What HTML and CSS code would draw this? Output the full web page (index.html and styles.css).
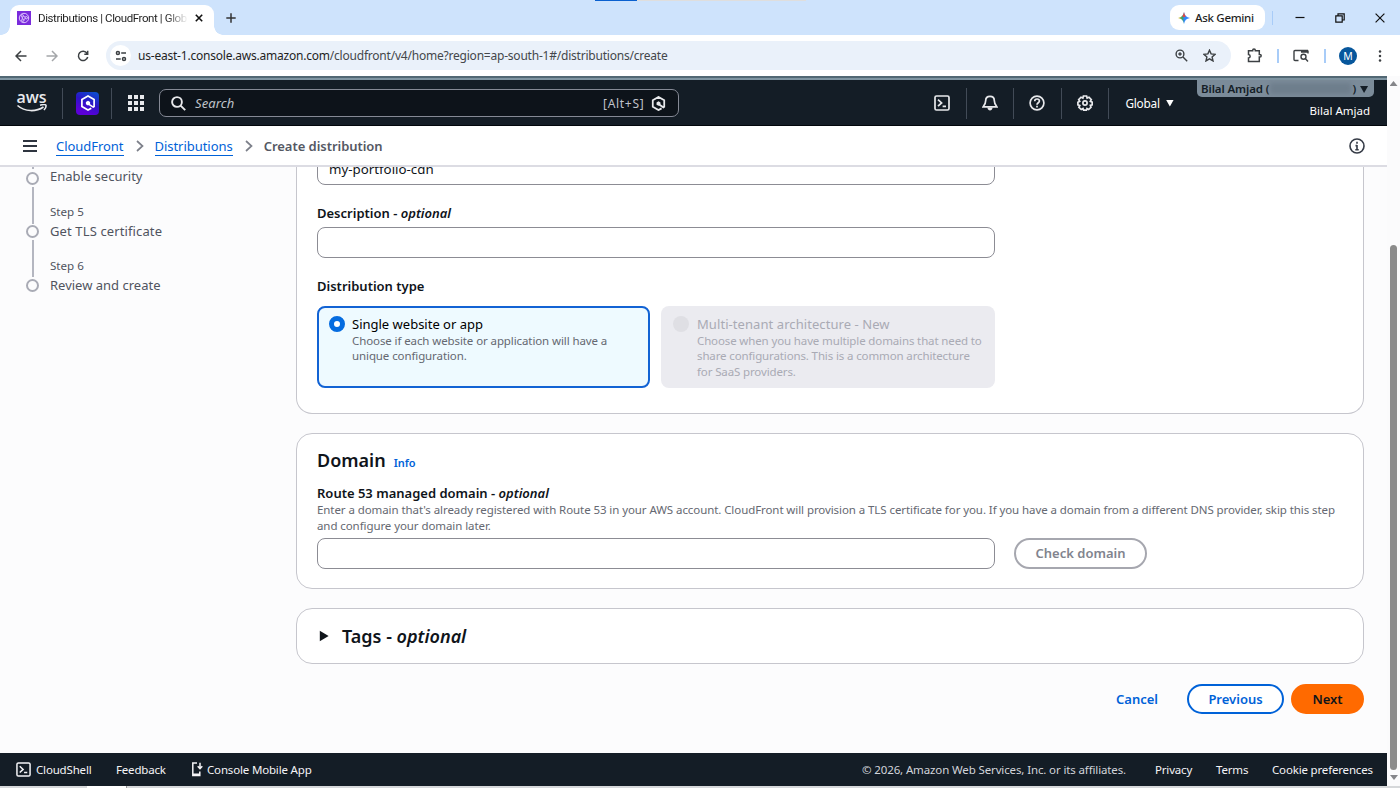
FILE: index.html
```html
<!DOCTYPE html>
<html lang="en">
<head>
<meta charset="utf-8">
<title>Distributions | CloudFront | Global</title>
<link rel="stylesheet" href="styles.css">
</head>
<body>
<svg width="0" height="0" class="defs" aria-hidden="true">
  <symbol id="terminal" viewBox="0 0 16 16"><rect x="1" y="1" width="14" height="14" rx="1.5"/><path d="M4 4.6l3.6 3.3L4 11.2M8.6 11.3H12"/></symbol>
  <symbol id="hexq" viewBox="0 0 16 16"><path d="M11.300 13.200L8 15 1.900 11.500v-7L8 1l6.100 3.500v7l-.9.6-4.600-3"/><path d="M5.900 6.900v2.300l2.100 1.200 2.100-1.200V6.900L8 5.700z" fill="currentColor" stroke="none"/></symbol>
</svg>
<div class="window">
  <header class="tabstrip">
    <div class="tab">
      <span class="favicon"><svg viewBox="0 0 14 14"><circle cx="7" cy="7" r="4.700"/><circle cx="5.200" cy="4.800" r="1.200"/><circle cx="9.300" cy="6.700" r="1.200"/><circle cx="5.800" cy="9.200" r="1.200"/><path d="M6.400 5.200l1.800 1M8.300 7.400L6.800 8.600M5.300 6v2"/></svg></span>
      <span class="tab-title">Distributions | CloudFront | Glob</span>
      <svg class="tab-close" viewBox="0 0 8 8"><path d="M.8.8l6.400 6.400M7.200.8L.8 7.200"/></svg>
    </div>
    <svg class="tab-add" viewBox="0 0 10 10"><path d="M5 .3v9.400M.3 5h9.400"/></svg>
    <div class="loader"></div>
    <div class="gemini">
      <svg viewBox="0 0 12 12"><defs><linearGradient id="gm" x1="0" y1="0" x2="1" y2="0"><stop offset="0" stop-color="#fabb05"/><stop offset=".35" stop-color="#34a06a"/><stop offset=".55" stop-color="#3186ff"/><stop offset="1" stop-color="#3186ff"/></linearGradient></defs><path d="M6 0c.6 3.600 2.400 5.400 6 6-3.600.600-5.400 2.400-6 6-.600-3.600-2.400-5.400-6-6 3.600-.600 5.400-2.400 6-6z" fill="url(#gm)"/><path d="M6 0c.3 2 .9 3.300 1.800 4.300L6 5.200 4.200 4.300C5.100 3.300 5.700 2 6 0z" fill="#e8453c"/></svg>
      <span>Ask Gemini</span>
    </div>
    <i class="blue-sep"></i>
    <div class="win-controls">
      <svg viewBox="0 0 10 10"><path d="M.5 4.500h9"/></svg>
      <svg viewBox="0 0 10 10"><path d="M.8 2.800h6.400v6.400H.8zM3 2.800V.8h6.200V7H7.200"/></svg>
      <svg viewBox="0 0 10 10"><path d="M.6.6l8.800 8.800M9.400.6L.6 9.400"/></svg>
    </div>
  </header>

  <div class="toolbar">
    <svg class="nav-ico" viewBox="0 0 12 12"><path d="M11.500 6H1M6 1L1 6l5 5"/></svg>
    <svg class="nav-ico off" viewBox="0 0 12 12"><path d="M.5 6H11M6 1l5 5-5 5"/></svg>
    <svg class="nav-ico reload" viewBox="0 0 12 12"><path d="M10 3.200A4.700 4.700 0 1 0 10.700 7M10.700.8v3.400H7.300"/></svg>
    <div class="omnibox">
      <span class="site"><svg viewBox="0 0 12 12"><circle cx="2.900" cy="3" r="1.500"/><path d="M6.200 3H11M1 9h4.700"/><circle cx="9" cy="9" r="1.500"/></svg></span>
      <span class="url"><b>us-east-1.console.aws.amazon.com</b>/cloudfront/v4/home?region=ap-south-1#/distributions/create</span>
      <svg class="zoomico" viewBox="0 0 13 13"><circle cx="5" cy="5" r="3.900"/><path d="M8 8l4.200 4.200M5 3.300v3.400M3.300 5h3.400"/></svg>
      <svg class="star" viewBox="0 0 13 13"><path d="M6.500 1.200l1.600 3.700 4 .4-3 2.600.9 4-3.500-2.100-3.500 2.100.9-4-3-2.600 4-.4z"/></svg>
    </div>
    <div class="tb-right">
      <svg class="ext" viewBox="0 0 15 15"><path d="M1.500 2.800h4.200V2.200a1.300 1.300 0 0 1 2.600 0v.6h4v3.700h.6a1.300 1.300 0 0 1 0 2.600h-.6v4.400H1.500V9.900c2.200-.1 2.200-3.300 0-3.400z"/></svg>
      <i class="blue-sep"></i>
      <svg class="lens" viewBox="0 0 16 13"><path d="M5.500 11.500H2A1 1 0 0 1 1 10.500v-8a1 1 0 0 1 1-1h13M15 1.500v3"/><path d="M8 2.500h7" stroke-width="2.500"/><circle cx="10.500" cy="7.800" r="2.500"/><path d="M12.300 9.600l2.700 2.900"/></svg>
      <i class="blue-sep two"></i>
      <span class="avatar">M</span>
      <svg class="dots" viewBox="0 0 4 12"><circle cx="2" cy="1.600" r="1.250"/><circle cx="2" cy="6" r="1.250"/><circle cx="2" cy="10.400" r="1.250"/></svg>
    </div>
  </div>

  <div class="viewport">
    <div class="page">
      <nav class="awsnav">
        <div class="logo"><span>aws</span><svg viewBox="0 0 32 10"><path d="M1.500 1.500C9 8 20 8 27.500 3"/><path d="M24 1.200c3-.9 5.800-.8 6 .1.200 1-.6 3.200-2 4.700"/></svg></div>
        <i class="sep s1"></i>
        <span class="qicon"><svg><use href="#hexq"/></svg></span>
        <i class="sep s2"></i>
        <svg class="grid9" viewBox="0 0 16 16"><path d="M0 0h4v4H0zM6 0h4v4H6zM12 0h4v4h-4zM0 6h4v4H0zM6 6h4v4H6zM12 6h4v4h-4zM0 12h4v4H0zM6 12h4v4H6zM12 12h4v4h-4z"/></svg>
        <div class="search">
          <svg class="mag" viewBox="0 0 15 15"><circle cx="6" cy="6" r="4.900"/><path d="M9.600 9.600l4.600 4.600"/></svg>
          <em>Search</em><span class="alt">[Alt+S]</span>
          <svg class="sq"><use href="#hexq"/></svg>
        </div>
        <div class="services">
          <span><svg><use href="#terminal"/></svg></span>
          <span><svg viewBox="0 0 16 16"><path d="M8 1.300c-3 0-4.300 2-4.300 4.200 0 3.300-.8 4.300-2.500 6.300h13.600c-1.700-2-2.500-3-2.500-6.300C12.300 3.300 11 1.300 8 1.300z"/><path d="M5.400 12.500c.3 4 4.900 4 5.200 0z" fill="currentColor" stroke="none"/></svg></span>
          <span><svg viewBox="0 0 16 16"><circle cx="8" cy="8" r="6.900"/><path d="M5.700 6.200c0-3 4.700-2.900 4.700-.1C10.400 7.800 8 7.700 8 9.700M8 10.700v1.700"/></svg></span>
          <span><svg viewBox="0 0 16 16"><path d="M6.400 1h3.200l.5 2 1.900-.8 2.300 2.500-1 1.700 1.900.8v2.600l-1.900.6.7 1.900-2.300 2.100-1.700-1L9.400 15.200H6.600L6 13.400l-1.800 1-2.300-2.100.9-1.900-1.900-.6V7.200l1.800-.8-1-1.700L4 2.200 5.900 3z"/><circle cx="8" cy="8" r="2.100"/></svg></span>
        </div>
        <span class="global">Global <i class="tri"></i></span>
        <div class="account">
          <div class="acct-tag"><span>Bilal Amjad (</span><i class="redacted"></i><span>)</span><i class="tri dark"></i></div>
          <div class="acct-name">Bilal Amjad</div>
        </div>
      </nav>

      <div class="crumbs">
        <svg class="burger" viewBox="0 0 14 12"><path d="M0 1h14M0 6h14M0 11h14"/></svg>
        <a class="c1">CloudFront</a>
        <svg class="chev" viewBox="0 0 8 12"><path d="M1 1l5.500 5L1 11"/></svg>
        <a class="c2">Distributions</a>
        <svg class="chev" viewBox="0 0 8 12"><path d="M1 1l5.500 5L1 11"/></svg>
        <strong>Create distribution</strong>
        <svg class="info-ico" viewBox="0 0 16 16"><circle cx="8" cy="8" r="7"/><path d="M8 3.800v2M8 7v5M6.500 7.600H8M6.300 11.700h3.400"/></svg>
      </div>

      <main class="content">
        <aside class="steps">
          <div class="step first"><div class="rail"><i class="stub"></i><i class="dot"></i><i class="line"></i></div><div class="txt"><b>Enable security</b></div></div>
          <div class="step"><div class="rail"><i class="dot"></i><i class="line"></i></div><div class="txt"><small>Step 5</small><b class="tls">Get TLS certificate</b></div></div>
          <div class="step"><div class="rail"><i class="dot"></i></div><div class="txt"><small>Step 6</small><b>Review and create</b></div></div>
        </aside>
        <section class="forms">
          <div class="card card-main">
            <div class="input name">my-portfolio-cdn</div>
            <label class="l-desc">Description - <em>optional</em></label>
            <div class="input"></div>
            <label class="l-type">Distribution type</label>
            <div class="tiles">
              <div class="tile on"><i class="radio"></i><div><h4>Single website or app</h4><p>Choose if each website or application will have a<br>unique configuration.</p></div></div>
              <div class="tile off"><i class="radio"></i><div><h4>Multi-tenant architecture - New</h4><p>Choose when you have multiple domains that need to<br>share configurations. This is a common architecture<br>for SaaS providers.</p></div></div>
            </div>
          </div>
          <div class="card card-domain">
            <div class="head"><h2>Domain</h2><a class="info">Info</a></div>
            <label class="l-route">Route 53 managed domain - <em>optional</em></label>
            <p class="hint">Enter a domain that's already registered with Route 53 in your AWS account. CloudFront will provision a TLS certificate for you. If you have a domain from a different DNS provider, skip this step<br>and configure your domain later.</p>
            <div class="row"><div class="input"></div><div class="btn muted">Check domain</div></div>
          </div>
          <div class="card card-tags"><svg viewBox="0 0 10 12"><path d="M.8.7L9.600 6 .8 11.300z"/></svg><h2>Tags - <em>optional</em></h2></div>
          <div class="actions"><span class="cancel">Cancel</span><div class="btn prev">Previous</div><div class="btn next">Next</div></div>
        </section>
      </main>

      <footer class="foot">
        <svg class="fterm"><use href="#terminal"/></svg><span class="f1">CloudShell</span>
        <span class="f2">Feedback</span>
        <svg class="phone" viewBox="0 0 12 15"><path d="M6 1H1.800v12.500h7V9.500M2 12.200h6.500M9 .8v5.500M6.700 4.300L9 6.600l2.300-2.300"/></svg><span class="f3">Console Mobile App</span>
        <span class="f4">© 2026, Amazon Web Services, Inc. or its affiliates.</span>
        <span class="f5">Privacy</span><span class="f6">Terms</span><span class="f7">Cookie preferences</span>
      </footer>
    </div>
    <div class="scrollbar"><i class="up"></i><i class="thumb"></i><i class="down"></i></div>
  </div>
  <div class="bottom-edge"><i></i></div>
</div>
</body>
</html>
```
FILE: styles.css
```css
* { box-sizing: border-box; }
body { margin: 0; overflow: hidden; font-family: "Noto Sans", "Open Sans", sans-serif; background: #fff; }
svg { fill: none; stroke: currentColor; flex: none; display: block; }
i { font-style: normal; display: block; flex: none; }
h2, h4, p { margin: 0; }
span, b, small, label, h4, a, strong { white-space: nowrap; }
.defs { position: absolute; }
.window { width: 1400px; height: 788px; display: flex; flex-direction: column; }

.tabstrip { height: 35px; flex: none; background: #cee3fc; display: flex; align-items: flex-start; padding-left: 10px; }
.tab { position: relative; width: 204px; height: 30px; margin-top: 5px; background: #fff; border-radius: 9px 9px 0 0; display: flex; align-items: center; padding: 0 0 4px 7px; }
.tab::before, .tab::after { content: ""; position: absolute; bottom: 0; width: 9px; height: 9px; }
.tab::before { left: -9px; background: radial-gradient(circle at 0 0, transparent 8.500px, #fff 9px); }
.tab::after { right: -9px; background: radial-gradient(circle at 100% 0, transparent 8.500px, #fff 9px); }
.favicon { width: 14px; height: 14px; background: #7a2bdc; color: #e5d2ff; }
.favicon svg { width: 14px; height: 14px; stroke-width: .9; }
.tab-title { width: 149px; margin-left: 7px; overflow: hidden; font: 11.500px/18px Roboto, sans-serif; letter-spacing: -.4px; color: #1f1f1f; -webkit-mask-image: linear-gradient(90deg, #000 128px, transparent 150px); mask-image: linear-gradient(90deg, #000 128px, transparent 150px); }
.tab-close { width: 8px; height: 8px; margin-left: 8px; stroke-width: 1.600; color: #111; }
.tab-add { width: 10px; height: 10px; margin: 13px 0 0 12px; stroke-width: 1.500; color: #333; }
.loader { width: 211px; height: 1px; margin-left: 359px; background: linear-gradient(90deg, #0a60cf 42px, #dfdedd 42px); }
.gemini { width: 95px; height: 25px; margin: 5px 0 0 364px; background: #fff; border-radius: 9px; display: flex; align-items: center; padding-left: 8px; font-size: 11.500px; font-weight: 500; color: #1f1f1f; }
.gemini svg { width: 12px; height: 12px; stroke: none; margin-right: 5px; }
.gemini span { letter-spacing: -.3px; }
.blue-sep { width: 2px; height: 14px; background: #a8ccf8; }
.gemini + .blue-sep { width: 1px; margin: 11px 0 0 7px; }
.win-controls { display: flex; gap: 30px; margin: 13px 0 0 22px; color: #111; }
.win-controls svg { width: 10px; height: 10px; stroke-width: 1.200; }

.toolbar { height: 41px; flex: none; background: #fff; display: flex; align-items: center; padding-left: 15px; color: #3c4043; }
.nav-ico { width: 12px; height: 12px; margin-right: 19px; stroke-width: 1.500; }
.reload { margin-right: 17px; }
.off { color: #a4a6a9; }
.omnibox { width: 1125px; height: 29px; border-radius: 15px; background: #eaf1fa; display: flex; align-items: center; padding-left: 4px; }
.site { width: 21px; height: 21px; border-radius: 50%; background: #fff; display: grid; place-items: center; }
.site svg { width: 12px; height: 12px; stroke-width: 1.500; }
.url { width: 1037px; margin-left: 7px; font-size: 12px; line-height: 18px; color: #44474b; letter-spacing: -.215px; }
.url b { font-weight: 400; color: #1f1f1f; }
.zoomico, .star { width: 13px; height: 13px; stroke-width: 1.400; }
.star { margin-left: 15px; }
.tb-right { display: flex; align-items: center; margin-left: 16px; }
.ext { width: 15px; height: 15px; stroke-width: 1.500; margin-right: 15px; }
.lens { width: 16px; height: 13px; stroke-width: 1.400; margin: 0 15px 0 14px; }
.two { margin-right: 13px; }
.avatar { width: 18px; height: 18px; border-radius: 50%; background: #07579c; color: #fff; font-size: 10.500px; line-height: 18px; text-align: center; }
.dots { width: 4px; height: 12px; fill: currentColor; stroke: none; margin-left: 21px; }

.viewport { height: 710px; flex: none; display: flex; }
.page { width: 1387px; display: flex; flex-direction: column; }
.awsnav { height: 50px; flex: none; position: relative; background: #141d26; border-top: 2px solid #526874; border-bottom: 1px solid #02070c; box-shadow: inset 0 2px #7f95a2; display: flex; align-items: center; padding: 3px 0 0 16px; color: #e8e9ec; }
.logo { width: 31px; height: 24px; display: flex; flex-direction: column; }
.logo span { font: 600 16px/13px "Open Sans", sans-serif; letter-spacing: -.1px; text-align: center; }
.logo svg { width: 32px; height: 10px; stroke-width: 1.600; }
.sep { width: 1px; height: 31px; background: #424b57; }
.s1 { margin-left: 15px; }
.s2 { margin-left: 12px; }
.qicon { width: 23px; height: 23px; border-radius: 4px; margin-left: 13px; background: linear-gradient(25deg, #5b00d8 20%, #2b14c5 55%, #0857d0); color: #fff; display: grid; place-items: center; }
.qicon svg { width: 16px; height: 16px; stroke-width: 1.700; }
.grid9 { width: 16px; height: 16px; margin-left: 16px; fill: currentColor; stroke: none; }
.search { width: 520px; height: 28px; margin-left: 15px; background: #0d131a; border: 1px solid #858995; border-radius: 7px; display: flex; align-items: center; padding-left: 11px; font-size: 13px; }
.mag { width: 15px; height: 15px; stroke-width: 1.900; margin-right: 9px; }
.search em { width: 408px; color: #bfc2c9; letter-spacing: .1px; }
.alt { width: 43px; color: #c0c2ca; font-size: 12.500px; letter-spacing: .6px; }
.alt { letter-spacing: .7px; font-size: 12px; }
.sq { width: 15px; height: 15px; margin-left: 5px; stroke-width: 1.900; }
.services { display: flex; margin-left: 240px; }
.services span { width: 47.600px; height: 31px; border-right: 1px solid #424b57; display: grid; place-items: center; }
.services svg { width: 16px; height: 16px; stroke-width: 1.700; }
.global { display: flex; align-items: center; margin-left: 16px; font-size: 11.800px; color: #fff; letter-spacing: -.2px; }
.tri { width: 8px; height: 7px; margin-left: 6px; background: #fff; clip-path: polygon(0 0, 100% 0, 50% 100%); }
.account { position: absolute; top: 2px; right: 13px; width: 177px; color: #fff; }
.acct-tag { height: 17px; background: #7b8b99; border-radius: 0 0 5px 5px; display: flex; align-items: center; color: #141d26; font-size: 11.500px; line-height: 16px; letter-spacing: -.1px; font-weight: 600; padding-left: 4px; }
.redacted { width: 81px; height: 11px; margin: 0 1px; background: #6e7e8c; filter: blur(2px); }
.dark { background: #141d26; margin: 2px 0 0 4px; }
.acct-name { text-align: right; padding-right: 4px; font-size: 11.500px; line-height: 17px; margin-top: 5px; }

.crumbs { height: 41px; flex: none; background: #fff; border-bottom: 2px solid #dcdce3; display: flex; align-items: center; padding: 1px 0 0 23px; font-size: 13px; color: #656871; }
.burger { width: 14px; height: 12px; stroke-width: 2; color: #2f3540; margin-right: 19px; }
.crumbs a { color: #0062d8; line-height: 17px; border-bottom: 1px solid #0062d8; margin-top: 1px; letter-spacing: -.04px; }
.chev { width: 8px; height: 12px; stroke-width: 1.700; margin: 0 11px 0 12px; color: #7d808a; }
.crumbs strong { font-weight: 600; color: #545863; letter-spacing: -.04px; }
.info-ico { width: 16px; height: 16px; margin: 0 22px 0 auto; stroke-width: 1.600; color: #353b46; }

.content { height: 586px; flex: none; display: flex; overflow: hidden; background: #fcfcfd; }
.steps { width: 296px; padding-left: 25px; color: #50545f; }
.step { display: flex; height: 54px; }
.step.first { height: 37.500px; }
.rail { width: 15px; display: flex; flex-direction: column; align-items: center; padding-top: 20.500px; }
.step .dot { width: 13px; height: 13px; border: 2px solid #a9abb5; border-radius: 50%; }
.rail .line { width: 2px; height: 36.500px; background: #b4b6c0; margin: 2px 0; }
.first .rail { padding-top: 0; }
.stub { width: 2px; height: 2px; background: #b4b6c0; margin-bottom: 3px; }
.txt { display: flex; flex-direction: column; margin-left: 10px; }
.txt small { font-size: 11.600px; line-height: 14px; }
.txt b { font-size: 13px; font-weight: 400; line-height: 19px; margin-top: 3px; }
.txt .tls { letter-spacing: .12px; }
.first .txt b { margin-top: 0; }

.forms { width: 1068px; }
.card { background: #fff; border: 1px solid #c6c6cd; border-radius: 16px; padding: 0 20px; }
.card-main { height: 247px; border-top: 0; border-radius: 0 0 16px 16px; overflow: hidden; }
.input { width: 678px; height: 31px; border: 1px solid #8c8c94; border-radius: 8px; background: #fff; }
.name { margin-top: -13px; font-size: 13.300px; line-height: 29px; padding-left: 11px; color: #0f141a; }
label { display: block; font-size: 13px; line-height: 19px; font-weight: 600; color: #0f141a; }
.l-desc { margin: 19px 0 4px; }
.l-type { margin: 19px 0 10px; }
.tiles { display: flex; gap: 11px; }
.tile { width: 334px; height: 82px; border-radius: 8px; display: flex; padding: 9px 0 0 12px; }
.tile.on { width: 333px; background: #eefaff; border: 2px solid #1263d4; padding: 7px 0 0 10px; }
.tile.off { background: #ebebf0; color: #a9aab4; }
.radio { width: 16px; height: 16px; border-radius: 50%; border: 5px solid #056ce0; background: #fff; margin: 1px 7px 0 0; }
.tile.off .radio { background: #dfdfe4; border: 0; margin-right: 8px; }
.tile h4 { font-size: 13px; line-height: 18px; font-weight: 400; }
.tile.off h4 { letter-spacing: .07px; }
.tile p { font-size: 11.500px; line-height: 15.400px; letter-spacing: -.1px; white-space: nowrap; color: #656871; }
.tile.off p { color: inherit; letter-spacing: -.13px; }
.card-domain { height: 156px; margin-top: 19px; padding-top: 14px; }
h2 { font-size: 18px; line-height: 25px; font-weight: 600; color: #0f141a; white-space: nowrap; }
.head { display: flex; align-items: baseline; gap: 8px; }
.info { font-size: 11px; font-weight: 600; color: #0062d8; }
.l-route { margin-top: 11px; line-height: 18px; }
.hint { font-size: 11.500px; line-height: 15.500px; letter-spacing: -.08px; color: #656871; white-space: nowrap; }
.row { display: flex; gap: 19px; margin-top: 5px; }
.btn { height: 30px; border: 2px solid; border-radius: 16px; display: grid; place-items: center; font-size: 13px; line-height: 18px; padding-bottom: 1px; font-weight: 600; white-space: nowrap; }
.muted { width: 133px; height: 31px; color: #81848e; border-color: #a6a7af; }
.card-tags { height: 56px; margin-top: 19px; display: flex; align-items: center; padding-left: 22px; }
.card-tags svg { width: 10px; height: 12px; fill: #0f141a; stroke: none; margin-right: 13px; }
.actions { display: flex; justify-content: flex-end; align-items: center; margin-top: 20px; font-size: 13px; font-weight: 600; color: #0062d8; }
.cancel { margin-right: 29px; padding-bottom: 1px; }
.prev { width: 97px; margin-right: 7px; background: #fff; border-color: #0062d8; }
.next { width: 73px; color: #0f141a; background: #ff6a00; border-color: #ff6a00; }

.foot { height: 33px; flex: none; background: #141d26; display: flex; align-items: center; padding-left: 16px; font-size: 11.500px; letter-spacing: -.17px; color: #f4f4f7; }
.fterm { width: 15px; height: 15px; stroke-width: 1.600; margin-right: 5px; }
.f1 { width: 80px; }
.f2 { width: 75px; }
.phone { width: 12px; height: 15px; stroke-width: 1.500; margin-right: 4px; }
.f3 { width: 655px; }
.f4 { width: 293px; color: #d2d4da; letter-spacing: -.13px; }
.f5 { width: 61px; }
.f6 { width: 56px; }
.scrollbar { width: 13px; background: #fbfbfc; display: flex; flex-direction: column; align-items: center; padding-top: 5px; }
.up, .down { width: 8px; height: 5px; background: #85868a; clip-path: polygon(50% 0, 100% 100%, 0 100%); }
.thumb { width: 7px; height: 525px; margin-top: 159px; border-radius: 4px; background: #8b8b8b; }
.down { transform: rotate(180deg); margin-top: 5px; }
.bottom-edge { height: 2px; background: #d6d8da; padding-left: 87px; }
.bottom-edge i { width: 40px; height: 2px; background: #fff; border-right: 1px solid #999; }
```
